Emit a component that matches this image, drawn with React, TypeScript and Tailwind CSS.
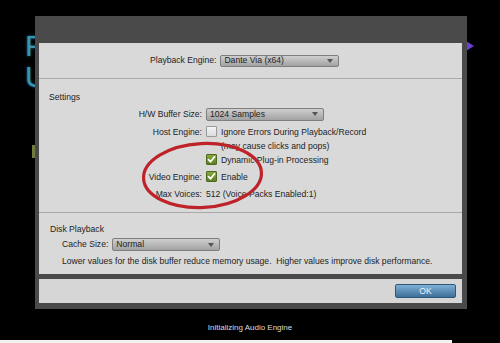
import React from "react";

function Dropdown({ value, className }: { value: string; className: string }) {
  return (
    <div
      className={
        "relative flex items-center rounded-[2px] border border-[#7e7e7e] bg-gradient-to-b from-[#cfcfcf] to-[#a2a2a2] pl-[3px] text-[#1e1e1e] " +
        className
      }
    >
      <span>{value}</span>
      <span className="absolute right-[5px] top-1/2 -translate-y-1/2 h-0 w-0 border-x-[3px] border-t-[4px] border-x-transparent border-t-[#555]" />
    </div>
  );
}

function Check({ checked }: { checked: boolean }) {
  if (!checked)
    return (
      <div className="h-[11px] w-[11px] rounded-[1px] border border-[#9a9a9a] bg-gradient-to-b from-[#f4f4f4] to-[#dcdcdc]" />
    );
  return (
    <div className="flex h-[11px] w-[11px] items-center justify-center rounded-[1px] border border-[#4d6a1c] bg-gradient-to-b from-[#86a83e] to-[#5d7f22]">
      <svg width="9" height="9" viewBox="0 0 9 9">
        <path d="M1.5 4.6 L3.6 6.8 L7.6 1.8" stroke="#fff" strokeWidth="1.7" fill="none" strokeLinecap="round" strokeLinejoin="round" />
      </svg>
    </div>
  );
}

function Row({ label, children, h }: { label: string; children?: React.ReactNode; h: string }) {
  return (
    <div className={"flex items-center " + h}>
      <div className="w-[163px] text-right whitespace-nowrap">{label}</div>
      <div className="ml-[4px] flex items-center whitespace-nowrap">{children}</div>
    </div>
  );
}

export default function App() {
  return (
    <div className="relative h-[343px] w-[500px] overflow-hidden bg-black font-['Liberation_Sans',Arial,sans-serif] text-[8.6px] text-[#232323]">
      {/* splash screen behind the dialog */}
      <div className="absolute left-[25px] top-[31px] text-[30px] leading-[30px] text-[#3a94b2] [text-shadow:0_0_3px_#1d6f8a]">
        P
      </div>
      <div className="absolute left-[25px] top-[62px] text-[30px] leading-[30px] text-[#3a94b2] [text-shadow:0_0_3px_#1d6f8a]">
        U
      </div>
      <div className="absolute left-[32px] top-[145px] h-[13px] w-[3px] bg-[#6f7d3c]" />
      <div className="absolute left-[466px] top-[41px] h-0 w-0 border-y-[5px] border-l-[8px] border-y-transparent border-l-[#6b3fd8]" />

      <div className="relative pl-[35px] pt-[16px]">
        <div className="flex h-[293px] w-[432px] flex-col bg-[#4a4a4a] pb-[6px] pl-[4px] pr-[5px] pt-[27px]">
          <div className="flex flex-1 flex-col bg-[#d9d9d9]">
            {/* playback engine */}
            <div className="flex h-[35px] items-center pl-[111px]">
              <span className="whitespace-nowrap">Playback Engine:</span>
              <Dropdown value="Dante Via (x64)" className="ml-[4px] h-[12px] w-[119px]" />
            </div>
            <div className="h-px bg-[#a9a9a9]" />
            {/* settings */}
            <div className="flex h-[133px] flex-col pt-[12px]">
              <div className="flex h-[12px] items-center pl-[10px]">Settings</div>
              <div className="mt-[4px]">
                <Row label="H/W Buffer Size:" h="h-[14px]">
                  <Dropdown value="1024 Samples" className="h-[13px] w-[118px]" />
                </Row>
              </div>
              <div className="mt-[4px]">
                <Row label="Host Engine:" h="h-[14px]">
                  <Check checked={false} />
                  <span className="ml-[4px]">Ignore Errors During Playback/Record</span>
                </Row>
              </div>
              <div className="mt-[1px]">
                <Row label="" h="h-[13px]">
                  <span className="ml-[15px]">(may cause clicks and pops)</span>
                </Row>
              </div>
              <Row label="" h="h-[14px]">
                <Check checked={true} />
                <span className="ml-[4px]">Dynamic Plug-in Processing</span>
              </Row>
              <div className="mt-[3px]">
                <Row label="Video Engine:" h="h-[14px]">
                  <Check checked={true} />
                  <span className="ml-[4px]">Enable</span>
                </Row>
              </div>
              <div className="mt-[3px]">
                <Row label="Max Voices:" h="h-[14px]">
                  <span>512 (Voice Packs Enabled:1)</span>
                </Row>
              </div>
            </div>
            <div className="h-px bg-[#a9a9a9]" />
            {/* disk playback */}
            <div className="flex h-[61px] flex-col pt-[10px]">
              <div className="flex h-[12px] items-center pl-[11px]">Disk Playback</div>
              <div className="mt-[3px] flex h-[13px] items-center pl-[23px]">
                <span>Cache Size:</span>
                <Dropdown value="Normal" className="ml-[4px] h-[13px] w-[108px]" />
              </div>
              <div className="mt-[4px] flex h-[12px] items-center whitespace-pre pl-[23px]">
                Lower values for the disk buffer reduce memory usage.  Higher values improve disk performance.
              </div>
            </div>
            <div className="h-[5px] bg-[#4a4a4a]" />
            {/* buttons */}
            <div className="flex flex-1 items-center justify-end bg-[#d6d6d6] pr-[6px]">
              <div className="flex h-[14px] w-[61px] items-center justify-center rounded-[2px] border border-[#2f5878] bg-gradient-to-b from-[#7fb0d6] to-[#3d6f99] text-[8.6px] text-[#e8f2fa]">
                OK
              </div>
            </div>
          </div>
        </div>
      </div>

      <div className="mt-[14px] h-[10px] text-center text-[8px] leading-[10px] text-[#dcdcdc]">
        Initializing Audio Engine
      </div>
      <div className="mt-[7px] h-[3px] w-[452px] bg-[#f2f2f2]" />

      {/* red annotation ellipse */}
      <svg className="pointer-events-none absolute left-0 top-0" width="500" height="343">
        <ellipse cx="202.5" cy="175.5" rx="59" ry="32" fill="none" stroke="#bd2329" strokeWidth="3.2" transform="rotate(-3 202.5 175.5)" />
      </svg>
    </div>
  );
}
